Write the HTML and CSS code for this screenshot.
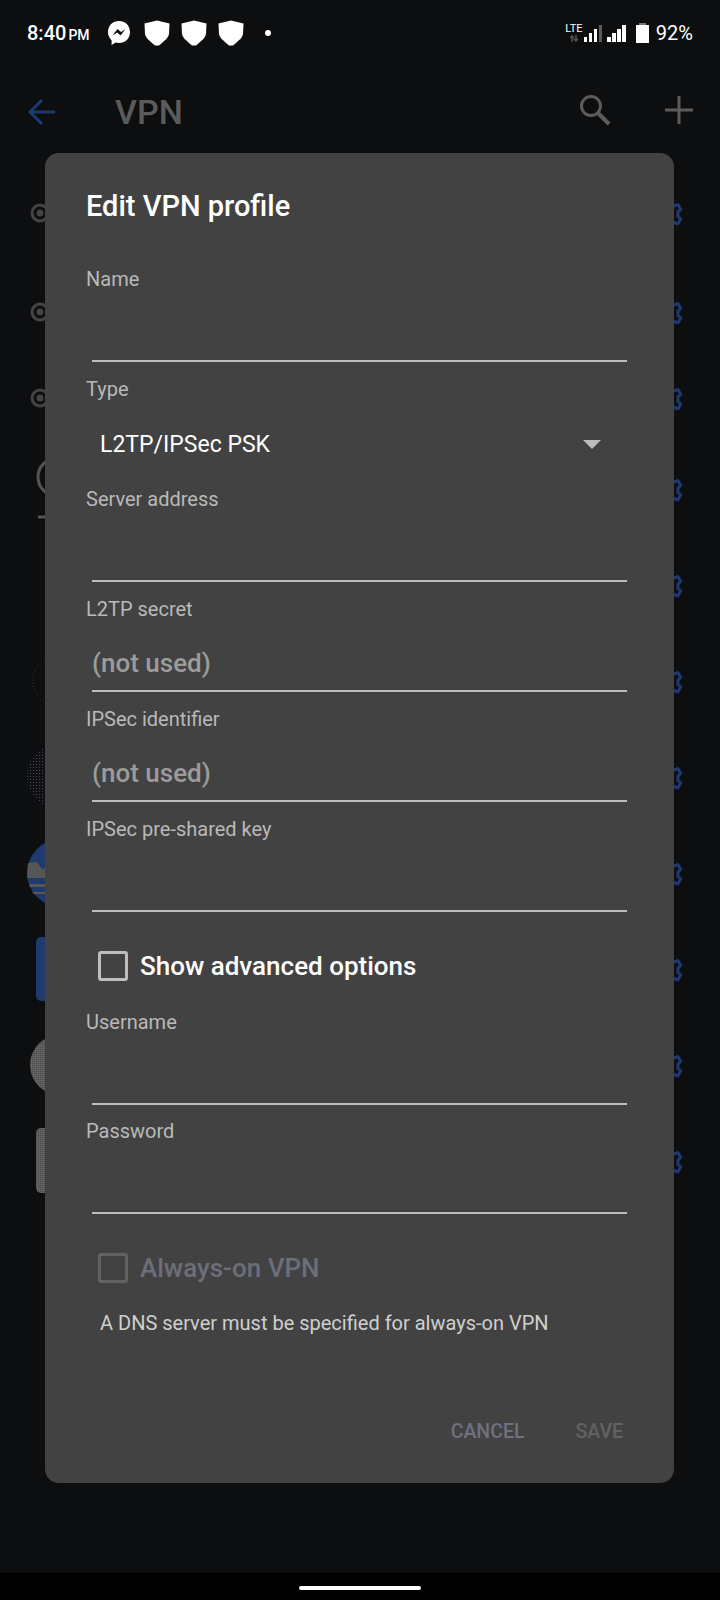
FILE: index.html
```html
<!DOCTYPE html>
<html lang="en">
<head>
    <meta charset="UTF-8">
    <meta name="viewport" content="width=device-width, initial-scale=1.0">
    <title>Edit VPN profile</title>
    <link rel="stylesheet" href="styles.css">
</head>
<body>
    <div class="screen">
        <!-- status bar -->
        <div class="status-bar">
            <div class="status-left">
                <span class="time">8:40</span><span class="ampm">PM</span>
                <svg class="messenger" width="24" height="26" viewBox="0 0 24 26">
                    <path fill="#fff" d="M12 1C5.6 1 1 5.6 1 12c0 3.4 1.3 6.2 3.6 8.2V25l4.2-2.4c1 .3 2.1.4 3.2.4 6.4 0 11-4.6 11-11S18.400 1 12 1z"/>
                    <path fill="#0d0e10" d="M5.500 15.500l5-6.500 3.600 3 4.400-3-4.900 6.400-3.500-3z"/>
                </svg>
                <svg class="shield" width="26" height="26" viewBox="0 0 26 26"><path fill="#fff" d="M13 .5L25.500 3.500 25 14c-.5 3-2.500 5-7 9l-3 2.500h-4L8 23c-4.500-4-6.500-6-7-9L.5 3.500z"/></svg>
                <svg class="shield" width="26" height="26" viewBox="0 0 26 26"><path fill="#fff" d="M13 .5L25.500 3.500 25 14c-.5 3-2.500 5-7 9l-3 2.500h-4L8 23c-4.500-4-6.500-6-7-9L.5 3.500z"/></svg>
                <svg class="shield" width="26" height="26" viewBox="0 0 26 26"><path fill="#fff" d="M13 .5L25.500 3.500 25 14c-.5 3-2.500 5-7 9l-3 2.500h-4L8 23c-4.500-4-6.500-6-7-9L.5 3.500z"/></svg>
                <span class="dot"></span>
            </div>
            <div class="status-right">
                <div class="lte">
                    <span>LTE</span>
                    <svg width="8" height="7" viewBox="0 0 8 7"><path stroke="#555" stroke-width="1.500" d="M2 7V1M0 3l2-2 2 2M6 0v6M4 4l2 2 2-2" fill="none"/></svg>
                </div>
                <div class="signal">
                    <i class="b1"></i><i class="b2"></i><i class="b3"></i><i class="b4 off"></i>
                </div>
                <div class="signal second">
                    <i class="b1"></i><i class="b2"></i><i class="b3"></i><i class="b4"></i>
                </div>
                <div class="battery"></div>
                <span class="percent">92%</span>
            </div>
        </div>

        <!-- toolbar, dimmed behind the dialog -->
        <div class="toolbar">
            <svg class="back" width="28" height="28" viewBox="0 0 28 28">
                <path fill="none" stroke="#1d3a70" stroke-width="3" d="M28 14H3M15 2L3 14l12 12"/>
            </svg>
            <span class="toolbar-title">VPN</span>
            <svg class="search" width="32" height="32" viewBox="0 0 32 32">
                <circle cx="12" cy="12" r="9.500" fill="none" stroke="#5c5c5c" stroke-width="3"/>
                <path stroke="#5c5c5c" stroke-width="4" d="M19 19l11 11"/>
            </svg>
            <svg class="plus" width="28" height="28" viewBox="0 0 28 28">
                <path stroke="#5c5c5c" stroke-width="3" d="M14 0v28M0 14h28"/>
            </svg>
        </div>

        <div class="list">
            <div class="row">
                <svg class="row-icon" viewBox="0 0 64 80"><circle cx="40" cy="40" r="8" class="ring"/><circle cx="40" cy="40" r="3.500" class="ring-dot"/></svg>
                <svg class="gear" viewBox="0 0 24 24"><use href="#gear-shape"/></svg>
            </div>
            <div class="row row-b">
                <svg class="row-icon" viewBox="0 0 64 80"><circle cx="40" cy="40" r="8" class="ring"/><circle cx="40" cy="40" r="3.500" class="ring-dot"/></svg>
                <svg class="gear" viewBox="0 0 24 24"><use href="#gear-shape"/></svg>
            </div>
            <div class="row row-c">
                <svg class="row-icon" viewBox="0 0 64 80"><circle cx="40" cy="40" r="8" class="ring"/><circle cx="40" cy="40" r="3.500" class="ring-dot"/></svg>
                <svg class="gear" viewBox="0 0 24 24"><use href="#gear-shape"/></svg>
            </div>
            <div class="row row-d">
                <svg class="row-icon" viewBox="0 0 64 80"><circle cx="57" cy="28" r="19" class="bulb"/><path d="M38 68h8" class="bulb"/></svg>
                <svg class="gear" viewBox="0 0 24 24"><use href="#gear-shape"/></svg>
            </div>
            <div class="row">
                <svg class="gear" viewBox="0 0 24 24"><use href="#gear-shape"/></svg>
            </div>
            <div class="row">
                <svg class="row-icon" viewBox="0 0 64 80"><circle cx="59" cy="40" r="26" fill="none" stroke="#3a3c40" stroke-dasharray="1 2"/></svg>
                <svg class="gear" viewBox="0 0 24 24"><use href="#gear-shape"/></svg>
            </div>
            <div class="row">
                <svg class="row-icon" viewBox="0 0 64 80"><circle cx="59" cy="39" r="32" fill="url(#dots-dark)"/></svg>
                <svg class="gear" viewBox="0 0 24 24"><use href="#gear-shape"/></svg>
            </div>
            <div class="row">
                <svg class="row-icon" viewBox="0 0 64 80">
                    <circle cx="61" cy="40" r="34" fill="#1e3a6e"/>
                    <path fill="#565656" d="M28 30l9-1 5 7 3-1 2 5 5 2v3H27z"/>
                    <path fill="#565656" d="M29 51h23v3H30zM32 59h20v2H34z"/>
                </svg>
                <svg class="gear" viewBox="0 0 24 24"><use href="#gear-shape"/></svg>
            </div>
            <div class="row">
                <svg class="row-icon" viewBox="0 0 64 80"><rect x="36" y="8" width="40" height="64" rx="5" fill="#1e3a6e"/></svg>
                <svg class="gear" viewBox="0 0 24 24"><use href="#gear-shape"/></svg>
            </div>
            <div class="row">
                <svg class="row-icon" viewBox="0 0 64 80"><circle cx="60" cy="40" r="30" fill="url(#dots-grey)"/></svg>
                <svg class="gear" viewBox="0 0 24 24"><use href="#gear-shape"/></svg>
            </div>
            <div class="row">
                <svg class="row-icon" viewBox="0 0 64 80"><rect x="36" y="7" width="40" height="65" rx="5" fill="url(#dots-grey)"/></svg>
                <svg class="gear" viewBox="0 0 24 24"><use href="#gear-shape"/></svg>
            </div>
        </div>

        <div class="nav-bar"><span class="nav-handle"></span></div>

        <!-- the dialog -->
        <div class="dialog">
            <h1>Edit VPN profile</h1>

            <div class="field">
                <label>Name</label>
                <div class="input"></div>
            </div>

            <div class="field">
                <label>Type</label>
                <div class="spinner">
                    <span>L2TP/IPSec PSK</span>
                    <span class="arrow"></span>
                </div>
            </div>

            <div class="field">
                <label>Server address</label>
                <div class="input"></div>
            </div>

            <div class="field">
                <label>L2TP secret</label>
                <div class="input">(not used)</div>
            </div>

            <div class="field">
                <label>IPSec identifier</label>
                <div class="input">(not used)</div>
            </div>

            <div class="field">
                <label>IPSec pre-shared key</label>
                <div class="input"></div>
            </div>

            <div class="check-row advanced">
                <span class="box"></span>
                <span>Show advanced options</span>
            </div>

            <div class="field field-short">
                <label>Username</label>
                <div class="input"></div>
            </div>

            <div class="field">
                <label>Password</label>
                <div class="input"></div>
            </div>

            <div class="check-row disabled">
                <span class="box"></span>
                <span>Always-on VPN</span>
            </div>

            <p class="note">A DNS server must be specified for always-on VPN</p>

            <div class="actions">
                <span class="btn-cancel">CANCEL</span>
                <span class="btn-save">SAVE</span>
            </div>
        </div>
    </div>

    <svg width="0" height="0" class="defs">
        <defs>
            <path id="gear-shape" d="M19.140 12.940c.04-.3.06-.61.06-.94 0-.32-.02-.64-.07-.94l2.030-1.580c.18-.14.23-.41.12-.61l-1.920-3.320c-.12-.22-.37-.29-.59-.22l-2.390.96c-.5-.38-1.030-.7-1.620-.94l-.36-2.540c-.04-.24-.24-.41-.48-.41h-3.840c-.24 0-.43.17-.47.41l-.36 2.540c-.59.24-1.130.57-1.620.94l-2.390-.96c-.22-.08-.47 0-.59.22L2.740 8.870c-.12.21-.08.47.12.61l2.030 1.580c-.05.3-.09.63-.09.94s.02.64.07.94l-2.030 1.580c-.18.14-.23.41-.12.61l1.920 3.320c.12.22.37.29.59.22l2.390.96c.5.38 1.030.7 1.620.94l.36 2.540c.05.24.24.41.48.41h3.840c.24 0 .44-.17.47-.41l.36-2.540c.59-.24 1.130-.56 1.620-.94l2.390.96c.22.08.47 0 .59-.22l1.920-3.320c.12-.22.07-.47-.12-.61l-2.010-1.580z"/>
            <pattern id="dots-dark" width="3" height="3" patternUnits="userSpaceOnUse">
                <rect width="3" height="3" fill="#0f1013"/>
                <rect width="1" height="1" fill="#4a4c50"/>
            </pattern>
            <pattern id="dots-grey" width="2" height="2" patternUnits="userSpaceOnUse">
                <rect width="2" height="2" fill="#626262"/>
                <rect width="1" height="1" fill="#484848"/>
            </pattern>
        </defs>
    </svg>
</body>
</html>
```

FILE: styles.css
```css
* {
    box-sizing: border-box;
}

body {
    margin: 0;
    background: #0d0e10;
    font-family: Roboto, 'Noto Sans', sans-serif;
}

.defs {
    position: absolute;
}

.screen {
    position: relative;
    width: 720px;
    height: 1600px;
    display: flex;
    flex-direction: column;
    overflow: hidden;
}

/* status bar */
.status-bar {
    height: 66px;
    flex-shrink: 0;
    padding: 0 27px;
    display: flex;
    align-items: center;
    justify-content: space-between;
    color: white;
}

.status-left,
.status-right {
    display: flex;
    align-items: center;
}

.time {
    font-size: 20px;
    font-weight: 500;
}

.ampm {
    font-size: 14px;
    font-weight: 500;
    margin-left: 2px;
    margin-top: 3px;
}

.messenger {
    margin-left: 17px;
}

.shield {
    margin-left: 11px;
}

.messenger + .shield {
    margin-left: 13px;
}

.dot {
    width: 6px;
    height: 6px;
    border-radius: 50%;
    background: white;
    margin-left: 21px;
}

.lte {
    display: flex;
    flex-direction: column;
    align-items: center;
    width: 16px;
    font-size: 11px;
    line-height: 10px;
}

.lte svg {
    display: block;
    margin-top: 1px;
}

.signal {
    display: flex;
    align-items: flex-end;
    gap: 1.500px;
    height: 18px;
    margin-left: 2px;
}

.signal.second {
    margin-left: 5px;
}

.signal i {
    width: 3.500px;
    background: white;
}

.signal .b1 { height: 5px; }
.signal .b2 { height: 9px; }
.signal .b3 { height: 13px; }
.signal .b4 { height: 17px; }
.signal .off { background: #5a5a5a; }

.battery {
    position: relative;
    width: 13px;
    height: 18px;
    background: white;
    margin-left: 10px;
    margin-top: 2px;
}

.battery::before {
    content: "";
    position: absolute;
    top: -2px;
    left: 3px;
    width: 7px;
    height: 2px;
    background: #777;
}

.percent {
    font-size: 20px;
    margin-left: 7px;
}

/* toolbar */
.toolbar {
    height: 88px;
    flex-shrink: 0;
    display: flex;
    align-items: center;
    padding: 0 27px;
}

.back {
    margin-top: 3px;
}

.toolbar-title {
    font-size: 34px;
    font-weight: 500;
    color: #5b5b5b;
    margin: 3px 0 0 60px;
    flex: 1;
}

.search {
    margin-right: 54px;
}

/* list behind the dialog */
.list {
    flex: 1;
    margin-top: 11px;
    overflow: hidden;
}

.row {
    height: 96px;
    position: relative;
    display: flex;
    align-items: center;
    justify-content: flex-end;
    padding-right: 36px;
}

.row-b { margin-top: 3px; }
.row-c { margin-top: -10px; }
.row-d { margin-top: -5px; }

.row-icon {
    position: absolute;
    left: 0;
    top: 8px;
    width: 64px;
    height: 80px;
}

.ring {
    fill: none;
    stroke: #444;
    stroke-width: 3;
}

.ring-dot {
    fill: #444;
}

.bulb {
    fill: none;
    stroke: #555;
    stroke-width: 3;
}

.gear {
    width: 30px;
    height: 30px;
    fill: none;
    stroke: #1e3a6e;
    stroke-width: 2.400;
}

.nav-bar {
    height: 27px;
    flex-shrink: 0;
    background: #000;
    display: flex;
    justify-content: center;
    padding-top: 13px;
}

.nav-handle {
    width: 122px;
    height: 4px;
    border-radius: 2px;
    background: white;
}

/* dialog */
.dialog {
    position: absolute;
    left: 45px;
    top: 153px;
    width: 629px;
    height: 1330px;
    background: #424242;
    border-radius: 14px;
    padding: 36px 47px 0 41px;
}

h1 {
    margin: 0 0 45px;
    font-size: 29px;
    line-height: 34px;
    height: 32px;
    font-weight: 500;
    color: white;
}

.field {
    height: 110px;
}

.field-short {
    height: 109px;
}

label {
    display: block;
    height: 24px;
    line-height: 26px;
    font-size: 20px;
    color: #b9b9b9;
}

.input {
    height: 72px;
    margin-left: 6px;
    border-bottom: 2px solid #bdbdbd;
    font-size: 26px;
    font-weight: 500;
    line-height: 30px;
    padding-top: 28px;
    color: #9c9c9c;
}

.spinner {
    display: flex;
    align-items: center;
    justify-content: space-between;
    height: 88px;
    padding: 0 26px 0 14px;
    font-size: 23px;
    color: white;
}

.arrow {
    width: 0;
    height: 0;
    border-left: 9px solid transparent;
    border-right: 9px solid transparent;
    border-top: 9px solid #bdbdbd;
}

.check-row {
    display: flex;
    align-items: center;
    gap: 12px;
    height: 30px;
    margin-left: 12px;
    font-size: 26px;
    font-weight: 500;
    color: white;
}

.advanced {
    margin-top: 25px;
    margin-bottom: 28px;
}

.box {
    width: 30px;
    height: 30px;
    border: 3px solid #bdbdbd;
    border-radius: 3px;
}

.disabled {
    margin-top: 25px;
    color: #6c6e78;
}

.disabled .box {
    border-color: #626262;
}

.note {
    margin: 27px 0 0 14px;
    line-height: 26px;
    font-size: 20px;
    color: #cfcfcf;
}

.actions {
    display: flex;
    justify-content: flex-end;
    gap: 51px;
    margin-top: 83px;
    padding-right: 4px;
    font-size: 19.500px;
    font-weight: 500;
    line-height: 26px;
}

.btn-cancel {
    color: #6f7180;
}

.btn-save {
    color: #626262;
}
```
